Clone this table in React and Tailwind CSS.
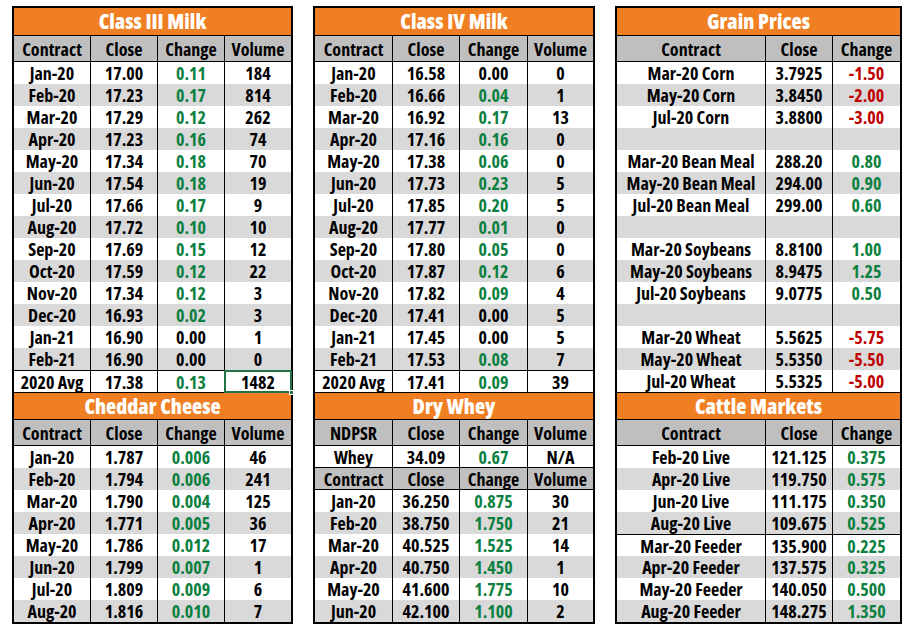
import React from 'react';

const G = 'text-[#0b8040]';
const R = 'text-[#c00000]';
const K = 'text-black';

const classIII = [
  ['Jan-20', '17.00', '0.11', '184', G],
  ['Feb-20', '17.23', '0.17', '814', G],
  ['Mar-20', '17.29', '0.12', '262', G],
  ['Apr-20', '17.23', '0.16', '74', G],
  ['May-20', '17.34', '0.18', '70', G],
  ['Jun-20', '17.54', '0.18', '19', G],
  ['Jul-20', '17.66', '0.17', '9', G],
  ['Aug-20', '17.72', '0.10', '10', G],
  ['Sep-20', '17.69', '0.15', '12', G],
  ['Oct-20', '17.59', '0.12', '22', G],
  ['Nov-20', '17.34', '0.12', '3', G],
  ['Dec-20', '16.93', '0.02', '3', G],
  ['Jan-21', '16.90', '0.00', '1', K],
  ['Feb-21', '16.90', '0.00', '0', K],
];

const classIV = [
  ['Jan-20', '16.58', '0.00', '0', K],
  ['Feb-20', '16.66', '0.04', '1', G],
  ['Mar-20', '16.92', '0.17', '13', G],
  ['Apr-20', '17.16', '0.16', '0', G],
  ['May-20', '17.38', '0.06', '0', G],
  ['Jun-20', '17.73', '0.23', '5', G],
  ['Jul-20', '17.85', '0.20', '5', G],
  ['Aug-20', '17.77', '0.01', '0', G],
  ['Sep-20', '17.80', '0.05', '0', G],
  ['Oct-20', '17.87', '0.12', '6', G],
  ['Nov-20', '17.82', '0.09', '4', G],
  ['Dec-20', '17.41', '0.00', '5', K],
  ['Jan-21', '17.45', '0.00', '5', K],
  ['Feb-21', '17.53', '0.08', '7', G],
];

const cheddar = [
  ['Jan-20', '1.787', '0.006', '46', G],
  ['Feb-20', '1.794', '0.006', '241', G],
  ['Mar-20', '1.790', '0.004', '125', G],
  ['Apr-20', '1.771', '0.005', '36', G],
  ['May-20', '1.786', '0.012', '17', G],
  ['Jun-20', '1.799', '0.007', '1', G],
  ['Jul-20', '1.809', '0.009', '6', G],
  ['Aug-20', '1.816', '0.010', '7', G],
];

const whey = [
  ['Jan-20', '36.250', '0.875', '30', G],
  ['Feb-20', '38.750', '1.750', '21', G],
  ['Mar-20', '40.525', '1.525', '14', G],
  ['Apr-20', '40.750', '1.450', '1', G],
  ['May-20', '41.600', '1.775', '10', G],
  ['Jun-20', '42.100', '1.100', '2', G],
];

const grain = [
  ['Mar-20 Corn', '3.7925', '-1.50', R],
  ['May-20 Corn', '3.8450', '-2.00', R],
  ['Jul-20 Corn', '3.8800', '-3.00', R],
  ['', '', '', K],
  ['Mar-20 Bean Meal', '288.20', '0.80', G],
  ['May-20 Bean Meal', '294.00', '0.90', G],
  ['Jul-20 Bean Meal', '299.00', '0.60', G],
  ['', '', '', K],
  ['Mar-20 Soybeans', '8.8100', '1.00', G],
  ['May-20 Soybeans', '8.9475', '1.25', G],
  ['Jul-20 Soybeans', '9.0775', '0.50', G],
  ['', '', '', K],
  ['Mar-20 Wheat', '5.5625', '-5.75', R],
  ['May-20 Wheat', '5.5350', '-5.50', R],
  ['Jul-20 Wheat', '5.5325', '-5.00', R],
];

const cattle = [
  ['Feb-20 Live', '121.125', '0.375', G],
  ['Apr-20 Live', '119.750', '0.575', G],
  ['Jun-20 Live', '111.175', '0.350', G],
  ['Aug-20 Live', '109.675', '0.525', G],
  ['Mar-20 Feeder', '135.900', '0.225', G],
  ['Apr-20 Feeder', '137.575', '0.325', G],
  ['May-20 Feeder', '140.050', '0.500', G],
  ['Aug-20 Feeder', '148.275', '1.350', G],
];

function Title({ children, top }) {
  return (
    <div className={`h-[28px] shrink-0 bg-[#f07f23] border-b border-black text-white text-[21px] font-extrabold leading-[26px] text-center ${top ? 'border-t' : ''}`}>
      {children}
    </div>
  );
}

// one row of cells; widths = column widths, colors per cell
function Row({ cells, widths, bg, h = 'h-[22px]', extra = '', colors = [] }) {
  return (
    <div className={`flex shrink-0 ${h} ${bg} ${extra}`}>
      {cells.map((c, i) => (
        <div
          key={i}
          style={{ width: widths[i] }}
          className={`flex items-center justify-center shrink-0 whitespace-nowrap leading-none ${i > 0 ? 'border-l border-black' : ''} ${colors[i] || 'text-black'}`}
        >
          {c}
        </div>
      ))}
    </div>
  );
}

function Header({ cells, widths, h = 'h-[26px]', extra = '' }) {
  return <Row cells={cells} widths={widths} bg="bg-[#bfbfbf]" h={h} extra={`border-b border-black ${extra}`} />;
}

const zebra = (i) => (i % 2 === 0 ? 'bg-white' : 'bg-[#d9d9d9]');

const W1 = [76, 67, 67, 67];
const W2 = [77, 67, 68, 66];
const W3 = [148, 67, 68];

export default function App() {
  const font = { fontFamily: '"Open Sans", "DejaVu Sans Condensed", sans-serif', fontStretch: '85%' };
  return (
    <div className="w-[915px] h-[627px] bg-white flex items-start gap-[20px] pl-[12px] pt-[6px] font-[750] text-[18px]" style={font}>
      {/* Left column */}
      <div className="w-[281px] border-2 border-black flex flex-col">
        <Title>Class III Milk</Title>
        <Header cells={['Contract', 'Close', 'Change', 'Volume']} widths={W1} />
        {classIII.map((r, i) => (
          <Row key={i} cells={r.slice(0, 4)} widths={W1} bg={zebra(i)} colors={['', '', r[4], '']} />
        ))}
        <div className="flex h-[22px] shrink-0 bg-white border-t border-black leading-none">
          <div style={{ width: 76 }} className="flex items-center justify-center shrink-0 whitespace-nowrap">2020 Avg</div>
          <div style={{ width: 67 }} className="flex items-center justify-center shrink-0 border-l border-black">17.38</div>
          <div style={{ width: 67 }} className={`flex items-center justify-center shrink-0 border-l border-black ${G}`}>0.13</div>
          <div style={{ width: 67 }} className="relative flex items-center justify-center shrink-0 border-l border-black">
            1482
            <div className="absolute -left-px -top-px -right-px -bottom-px border-2 border-[#217346]" />
            <div className="absolute -right-[3px] -bottom-[3px] w-[5px] h-[5px] bg-[#217346] border border-white" />
          </div>
        </div>
        <Title top>Cheddar Cheese</Title>
        <Header cells={['Contract', 'Close', 'Change', 'Volume']} widths={W1} />
        {cheddar.map((r, i) => (
          <Row key={i} cells={r.slice(0, 4)} widths={W1} bg={zebra(i)} colors={['', '', r[4], '']} />
        ))}
      </div>

      {/* Middle column */}
      <div className="w-[282px] border-2 border-black flex flex-col">
        <Title>Class IV Milk</Title>
        <Header cells={['Contract', 'Close', 'Change', 'Volume']} widths={W2} />
        {classIV.map((r, i) => (
          <Row key={i} cells={r.slice(0, 4)} widths={W2} bg={zebra(i)} colors={['', '', r[4], '']} />
        ))}
        <Row cells={['2020 Avg', '17.41', '0.09', '39']} widths={W2} bg="bg-white" extra="border-t border-black" colors={['', '', G, '']} />
        <Title top>Dry Whey</Title>
        <Header cells={['NDPSR', 'Close', 'Change', 'Volume']} widths={W2} />
        <Row cells={['Whey', '34.09', '0.67', 'N/A']} widths={W2} bg="bg-white" h="h-[21px]" colors={['', '', G, '']} />
        <Header cells={['Contract', 'Close', 'Change', 'Volume']} widths={W2} h="h-[23px]" extra="border-t" />
        {whey.map((r, i) => (
          <Row key={i} cells={r.slice(0, 4)} widths={W2} bg={zebra(i)} colors={['', '', r[4], '']} />
        ))}
      </div>

      {/* Right column */}
      <div className="w-[287px] border-2 border-black flex flex-col">
        <Title>Grain Prices</Title>
        <Header cells={['Contract', 'Close', 'Change']} widths={W3} />
        {grain.map((r, i) => (
          <Row key={i} cells={r.slice(0, 3)} widths={W3} bg={zebra(i)} colors={['', '', r[3]]} />
        ))}
        <Title top>Cattle Markets</Title>
        <Header cells={['Contract', 'Close', 'Change']} widths={W3} />
        {cattle.map((r, i) => (
          <Row
            key={i}
            cells={r.slice(0, 3)}
            widths={W3}
            bg={zebra(i)}
            extra={i === 4 ? 'border-t border-black' : ''}
            colors={['', '', r[3]]}
          />
        ))}
      </div>
    </div>
  );
}
